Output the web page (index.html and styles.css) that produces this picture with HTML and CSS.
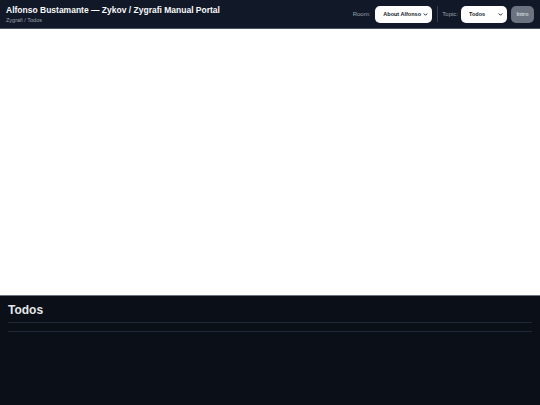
FILE: index.html
```html
<!DOCTYPE html>
<html lang="en">
<head>
<meta charset="utf-8">
<title>Zygrafi Manual Portal</title>
<link rel="stylesheet" href="styles.css">
</head>
<body>
<div class="app">
  <header class="topbar">
    <div class="brand">
      <div class="title">Alfonso Bustamante — Zykov / Zygrafi Manual Portal</div>
      <div class="crumbs">Zygrafi / Todos</div>
    </div>
    <div class="controls">
      <label class="ctl-label room-label" for="room">Room:</label>
      <span class="select-wrap">
        <select id="room" class="ctl-select room">
          <option>About Alfonso</option>
        </select>
        <svg class="chev" viewBox="0 0 10 10" width="5" height="5" aria-hidden="true"><path d="M2 3.5 L5 6.5 L8 3.5" fill="none" stroke="#111827" stroke-width="1.8" stroke-linecap="round" stroke-linejoin="round"/></svg>
      </span>
      <span class="sep"></span>
      <label class="ctl-label" for="topic">Topic:</label>
      <span class="select-wrap">
        <select id="topic" class="ctl-select topic">
          <option>Todos</option>
        </select>
        <svg class="chev" viewBox="0 0 10 10" width="5" height="5" aria-hidden="true"><path d="M2 3.5 L5 6.5 L8 3.5" fill="none" stroke="#111827" stroke-width="1.8" stroke-linecap="round" stroke-linejoin="round"/></svg>
      </span>
      <button class="intro" type="button">Intro</button>
    </div>
  </header>
  <main class="stage"></main>
  <section class="panel">
    <h2 class="panel-title">Todos</h2>
    <ul class="todo-list"></ul>
  </section>
</div>
</body>
</html>
```
FILE: styles.css
```css
html, body {
  margin: 0;
  padding: 0;
  height: 100%;
}
body {
  font-family: "Liberation Sans", Arial, sans-serif;
  background: #ffffff;
}
.app {
  display: flex;
  flex-direction: column;
  height: 100vh;
}
.topbar {
  height: 29px;
  box-sizing: border-box;
  background: #111827;
  border-bottom: 1px solid #4b5563;
  display: flex;
  align-items: center;
  justify-content: space-between;
  padding: 0 6px;
  flex: none;
}
.brand {
  display: flex;
  flex-direction: column;
  gap: 1px;
}
.title {
  color: #f9fafb;
  font-weight: bold;
  font-size: 8.5px;
  line-height: 11px;
}
.crumbs {
  color: #9ca3af;
  font-size: 5.5px;
  line-height: 7px;
}
.controls {
  display: flex;
  align-items: center;
  gap: 3px;
}
.ctl-label {
  color: #9ca3af;
  font-size: 6px;
}
.room-label {
  margin-right: 2px;
}
.select-wrap {
  position: relative;
  display: flex;
}
.ctl-select {
  -webkit-appearance: none;
  appearance: none;
  height: 17px;
  border: none;
  border-radius: 5px;
  background: #ffffff;
  color: #111827;
  font-family: "Liberation Sans", Arial, sans-serif;
  font-size: 5.5px;
  font-weight: bold;
  padding: 0 10px 0 8px;
  margin: 0;
}
.chev {
  position: absolute;
  right: 4px;
  top: 6px;
  pointer-events: none;
}
.room { width: 57px; }
.topic { width: 46px; }
.sep {
  width: 1px;
  height: 16px;
  background: #374151;
  margin: 0 1px 0 2px;
}
.intro {
  height: 17px;
  width: 23px;
  border: none;
  border-radius: 5px;
  background: #6b7280;
  color: #d1d5db;
  font-family: "Liberation Sans", Arial, sans-serif;
  font-size: 5.5px;
  font-weight: bold;
  padding: 0;
  margin-left: 1px;
}
.stage {
  flex: 1;
  background: #ffffff;
}
.panel {
  height: 110px;
  flex: none;
  box-sizing: border-box;
  background: #0b0f17;
  border-top: 1px solid #6b7280;
  padding: 7px 8px 0 8px;
}
.panel-title {
  margin: 0;
  color: #e5e7eb;
  font-size: 12px;
  font-weight: bold;
  line-height: 15px;
  padding-bottom: 4px;
  border-bottom: 1px solid #1f2937;
}
.todo-list {
  list-style: none;
  margin: 8px 0 0 0;
  padding: 0;
  border-top: 1px solid #1f2937;
}
```
